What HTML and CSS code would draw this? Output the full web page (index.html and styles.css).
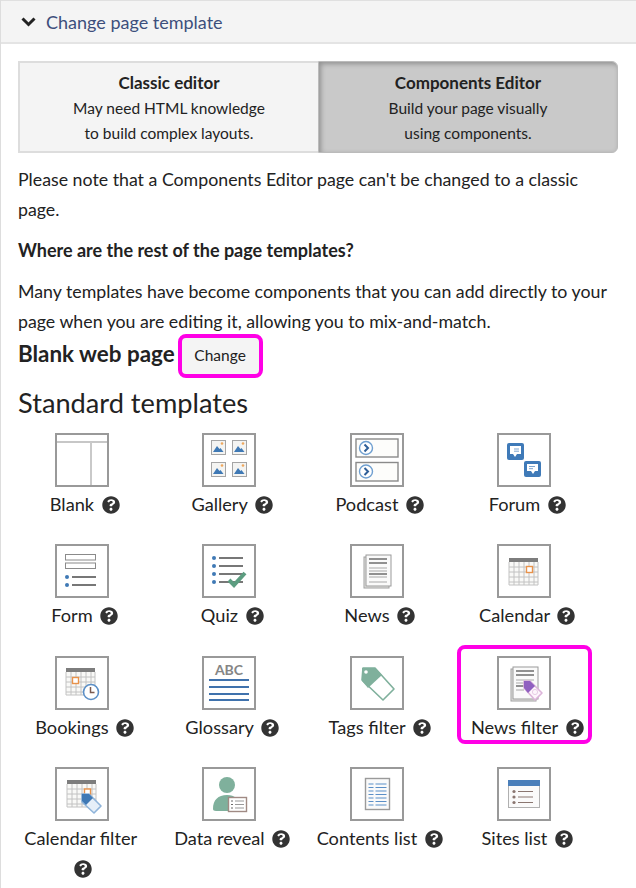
FILE: index.html
```html
<!DOCTYPE html>
<html lang="en">
<head>
  <meta charset="UTF-8">
  <title>Change page template</title>
  <meta name="viewport" content="width=device-width, initial-scale=1.0">
  <link rel="stylesheet" href="styles.css">
</head>
<body>

<!-- shared icon parts -->
<svg class="defs" width="0" height="0">
  <symbol id="help" viewBox="0 0 512 512">
    <path fill="currentColor" d="M504 256c0 136.997-111.043 248-248 248S8 392.997 8 256C8 119.083 119.043 8 256 8s248 111.083 248 248zM262.655 90c-54.497 0-89.255 22.957-109.52 53.468-2.625 3.954-1.747 9.286 2.05 12.16l34.673 26.293c3.905 2.962 9.469 2.258 12.52-1.605 17.851-22.641 30.091-35.799 57.293-35.799 20.438 0 45.7 13.164 45.7 32.982 0 14.988-12.372 22.681-32.54 33.992C247.04 210.5 216 229.5 216 270.3V276c0 6.627 5.373 12 12 12h56c6.627 0 12-5.373 12-12v-4c0-27.9 77.6-29.4 77.6-101.6 0-54.5-56.5-80.4-110.9-80.4zM256 336c-23.7 0-43 19.3-43 43s19.3 43 43 43 43-19.3 43-43-19.3-43-43-43z"/>
  </symbol>
  <g id="thumb">
    <rect x="0.5" y="0.5" width="14" height="14" fill="#f4f4f2" stroke="#a5a5a5"/>
    <path d="M2 12l4-6 2.5 3 1-1 3 4z" fill="#3f79b5"/>
    <circle cx="11" cy="3.5" r="1.3" fill="#efa75c"/>
  </g>
  <g id="play">
    <circle r="6.5" fill="#fff" stroke="#6f9fd0" stroke-width="1.4"/>
    <path d="M-1.5 -3.5L2 0L-1.5 3.5" fill="none" stroke="#2f5f98" stroke-width="2"/>
  </g>
  <g id="calgrid">
    <rect x="0" y="0" width="29" height="27" fill="#f9f9f7" stroke="none"/>
    <path d="M0 9h29M0 14h29M0 19h29M0 24h29M5 4v23M10 4v23M15 4v23M20 4v23M25 4v23M0 4v23M29 4v23M0 27h29" stroke="#c2c2c2" stroke-width="1" fill="none"/>
    <rect x="0" y="0" width="29" height="4" fill="#7d7d7d"/>
  </g>
</svg>

<div class="panel">

  <div class="panel-head">
    <svg class="chevron" width="15" height="10" viewBox="0 0 15 10"><path d="M1.5 1.500L7.500 7.500L13.500 1.500" fill="none" stroke="#222" stroke-width="3"/></svg>
    <a class="panel-title">Change page template</a>
  </div>

  <div class="panel-body">

    <div class="editor-switch">
      <div class="editor-opt">
        <strong>Classic editor</strong>
        May need HTML knowledge<br>to build complex layouts.
      </div>
      <div class="editor-opt active">
        <strong>Components Editor</strong>
        Build your page visually<br>using components.
      </div>
    </div>

    <p class="note">Please note that a Components Editor page can't be changed to a classic page.</p>
    <p class="note note-bold">Where are the rest of the page templates?</p>
    <p class="note">Many templates have become components that you can add directly to your page when you are editing it, allowing you to mix-and-match.</p>

    <div class="current">
      <span class="current-name">Blank web page</span>
      <button class="change-btn">Change</button>
    </div>

    <h2 class="section-title">Standard templates</h2>

    <div class="tpl-grid">

      <div class="tpl">
        <div class="tpl-icon">
          <svg viewBox="0 0 50 50" width="50" height="50"><path d="M-2 7h54" stroke="#b5b5b5" stroke-width="1.5"/><path d="M34 7v45" stroke="#c9c9c9" stroke-width="2"/></svg>
        </div>
        <div class="tpl-label">Blank <svg class="help"><use href="#help"/></svg></div>
      </div>

      <div class="tpl">
        <div class="tpl-icon">
          <svg viewBox="0 0 50 50" width="50" height="50">
            <use href="#thumb" x="7" y="5"/><use href="#thumb" x="28" y="5"/>
            <use href="#thumb" x="7" y="27"/><use href="#thumb" x="28" y="27"/>
          </svg>
        </div>
        <div class="tpl-label">Gallery <svg class="help"><use href="#help"/></svg></div>
      </div>

      <div class="tpl">
        <div class="tpl-icon">
          <svg viewBox="0 0 50 50" width="50" height="50">
            <rect x="4" y="4" width="42" height="18" fill="#fdfdfb" stroke="#8a8a8a" stroke-width="1.4"/>
            <rect x="4" y="27.5" width="42" height="18.5" fill="#fdfdfb" stroke="#8a8a8a" stroke-width="1.4"/>
            <use href="#play" x="14" y="13"/><use href="#play" x="14" y="36.5"/>
          </svg>
        </div>
        <div class="tpl-label">Podcast <svg class="help"><use href="#help"/></svg></div>
      </div>

      <div class="tpl">
        <div class="tpl-icon">
          <svg viewBox="0 0 50 50" width="50" height="50">
            <rect x="8" y="8" width="17" height="17" rx="2" fill="#3f7ab8"/>
            <path d="M11 11h11v8h-4l-2 3-2-3h-3z" fill="#fff"/>
            <path d="M15 14h5M15 16.2h5" stroke="#7ea6d0" stroke-width="1"/>
            <rect x="25" y="26" width="17" height="16" rx="2" fill="#3f7ab8"/>
            <path d="M28 29h11v7h-3l-2 3-2-3h-4z" fill="#fff"/>
            <path d="M30 31.5h6M30 33.7h4" stroke="#7ea6d0" stroke-width="1"/>
          </svg>
        </div>
        <div class="tpl-label">Forum <svg class="help"><use href="#help"/></svg></div>
      </div>

      <div class="tpl">
        <div class="tpl-icon">
          <svg viewBox="0 0 50 50" width="50" height="50">
            <rect x="8.5" y="8.5" width="30" height="5.5" fill="#fff" stroke="#8a8a8a"/>
            <rect x="8.5" y="17" width="30" height="5.5" fill="#fff" stroke="#8a8a8a"/>
            <circle cx="10" cy="31" r="2" fill="#3f79b5"/><circle cx="10" cy="39" r="2" fill="#3f79b5"/>
            <path d="M15 31h24M15 39h24" stroke="#777" stroke-width="2"/>
          </svg>
        </div>
        <div class="tpl-label">Form <svg class="help"><use href="#help"/></svg></div>
      </div>

      <div class="tpl">
        <div class="tpl-icon">
          <svg viewBox="0 0 50 50" width="50" height="50">
            <circle cx="10" cy="12" r="2" fill="#3f79b5"/><circle cx="10" cy="20" r="2" fill="#3f79b5"/>
            <circle cx="10" cy="28" r="2" fill="#3f79b5"/><circle cx="10" cy="36" r="2" fill="#3f79b5"/>
            <path d="M15 12h24M15 20h24M15 28h24M15 36h24" stroke="#777" stroke-width="2"/>
            <path d="M25 34l5 5L41 27" fill="none" stroke="#5c9d80" stroke-width="4"/>
          </svg>
        </div>
        <div class="tpl-label">Quiz <svg class="help"><use href="#help"/></svg></div>
      </div>

      <div class="tpl">
        <div class="tpl-icon">
          <svg viewBox="0 0 50 50" width="50" height="50">
            <rect x="12" y="11" width="25" height="31" fill="#e4e4e2" stroke="#a0a0a0"/>
            <rect x="14" y="9" width="25" height="31" fill="#fafafa" stroke="#9a9a9a"/>
            <path d="M17 13h18M17 17h18M17 28h18" stroke="#6e6e6e" stroke-width="1.6"/>
            <path d="M17 22h18M17 25h18M17 31h18M17 36h18" stroke="#c4c4c4" stroke-width="1.6"/>
          </svg>
        </div>
        <div class="tpl-label">News <svg class="help"><use href="#help"/></svg></div>
      </div>

      <div class="tpl">
        <div class="tpl-icon">
          <svg viewBox="0 0 50 50" width="50" height="50">
            <use href="#calgrid" x="10" y="12"/>
            <rect x="27.5" y="20.5" width="6" height="6" fill="#fff" stroke="#e8924a" stroke-width="1.4"/>
          </svg>
        </div>
        <div class="tpl-label">Calendar <svg class="help"><use href="#help"/></svg></div>
      </div>

      <div class="tpl">
        <div class="tpl-icon">
          <svg viewBox="0 0 50 50" width="50" height="50">
            <use href="#calgrid" x="9" y="10"/>
            <rect x="15.5" y="19.5" width="6" height="6" fill="#fff" stroke="#e8924a" stroke-width="1.4"/>
            <circle cx="34" cy="34" r="7.5" fill="#fff" stroke="#5b8fc7" stroke-width="1.6"/>
            <path d="M33.5 29v5.5h4" fill="none" stroke="#7a5a50" stroke-width="1.5"/>
          </svg>
        </div>
        <div class="tpl-label">Bookings <svg class="help"><use href="#help"/></svg></div>
      </div>

      <div class="tpl">
        <div class="tpl-icon">
          <svg viewBox="0 0 50 50" width="50" height="50">
            <text class="abc" x="25" y="16.5" text-anchor="middle">ABC</text>
            <path d="M5 22h40M5 29h40M5 36h40M5 42h40" stroke="#3f72ad" stroke-width="2"/>
          </svg>
        </div>
        <div class="tpl-label">Glossary <svg class="help"><use href="#help"/></svg></div>
      </div>

      <div class="tpl">
        <div class="tpl-icon">
          <svg viewBox="0 0 50 50" width="50" height="50">
            <path d="M11 10h12l19 21-11 11-21-20z" fill="#fff" stroke="#7fb09c" stroke-width="1.6" stroke-linejoin="round"/>
            <path d="M10 10h13l7 7-14 13-6-7z" fill="#7fb09c"/>
            <circle cx="14" cy="14" r="1.8" fill="#fff"/>
          </svg>
        </div>
        <div class="tpl-label">Tags filter <svg class="help"><use href="#help"/></svg></div>
      </div>

      <div class="tpl tpl-marked">
        <div class="tpl-icon">
          <svg viewBox="0 0 50 50" width="50" height="50">
            <rect x="12" y="11" width="25" height="32" fill="#e4e4e2" stroke="#a0a0a0"/>
            <rect x="14" y="9" width="25" height="32" fill="#fafafa" stroke="#9a9a9a"/>
            <path d="M17 13h18M17 17h18M17 28h8" stroke="#6e6e6e" stroke-width="1.6"/>
            <path d="M17 22h18M17 25h12M17 32h8" stroke="#c4c4c4" stroke-width="1.6"/>
            <path d="M25 23h6l12 12-7 7-11-12z" fill="#fdf5fb" stroke="#dcb4da" stroke-width="1.6" stroke-linejoin="round"/>
            <path d="M25 23h6l5 5-7 7-4-5z" fill="#9060c0"/>
            <circle cx="36" cy="34" r="2.6" fill="none" stroke="#e8cde6"/>
          </svg>
        </div>
        <div class="tpl-label">News filter <svg class="help"><use href="#help"/></svg></div>
      </div>

      <div class="tpl">
        <div class="tpl-icon">
          <svg viewBox="0 0 50 50" width="50" height="50">
            <use href="#calgrid" x="10" y="11"/>
            <rect x="27.5" y="20" width="6" height="6" fill="#fff" stroke="#e8924a" stroke-width="1.4"/>
            <path d="M25 25h7l12 12-7 7-12-11z" fill="#e6eff8" stroke="#8fb4da" stroke-width="1.6" stroke-linejoin="round"/>
            <path d="M25 25h7l4 4-7 7-4-4z" fill="#3f79b5"/>
          </svg>
        </div>
        <div class="tpl-label tpl-label-wrap">Calendar filter <svg class="help"><use href="#help"/></svg></div>
      </div>

      <div class="tpl">
        <div class="tpl-icon">
          <svg viewBox="0 0 50 50" width="50" height="50">
            <circle cx="23" cy="16" r="8" fill="#7fb09c"/>
            <path d="M9 40c0-9 5-14 14-14 4 0 7 1 9 3h-8v13H12c-2 0-3-1-3-2z" fill="#7fb09c"/>
            <rect x="24.5" y="28.5" width="18" height="14" fill="#fff" stroke="#a08a84" stroke-width="1.4"/>
            <path d="M31 32h9M31 35.5h9M31 39h9" stroke="#999" stroke-width="1"/>
            <path d="M27 32h2M27 35.5h2M27 39h2" stroke="#6a6a6a" stroke-width="1"/>
          </svg>
        </div>
        <div class="tpl-label">Data reveal <svg class="help"><use href="#help"/></svg></div>
      </div>

      <div class="tpl">
        <div class="tpl-icon">
          <svg viewBox="0 0 50 50" width="50" height="50">
            <rect x="13.5" y="9.5" width="24" height="31" fill="#fafafa" stroke="#9a9a9a" stroke-width="1.4"/>
            <path d="M16.5 15h5M23.5 15h11M16.5 18.5h5M23.5 18.5h11M16.5 22h5M23.5 22h11M16.5 25.500h5M23.500 25.500h11M16.500 29h5M23.500 29h11M16.500 32.500h5M23.500 32.500h11M16.500 36h5M23.500 36h11" stroke="#5b8fc7" stroke-width="1.2"/>
          </svg>
        </div>
        <div class="tpl-label">Contents list <svg class="help"><use href="#help"/></svg></div>
      </div>

      <div class="tpl">
        <div class="tpl-icon">
          <svg viewBox="0 0 50 50" width="50" height="50">
            <rect x="9.500" y="11.500" width="31" height="27" fill="#fafafa" stroke="#b0b0b0"/>
            <rect x="9" y="11" width="32" height="6" fill="#4a7fba"/>
            <circle cx="15" cy="22.500" r="1.600" fill="#8a7670"/><circle cx="15" cy="28" r="1.600" fill="#8a7670"/><circle cx="15" cy="33.500" r="1.600" fill="#8a7670"/>
            <path d="M19 22.500h15M19 28h15M19 33.500h15" stroke="#8a7670" stroke-width="1"/>
          </svg>
        </div>
        <div class="tpl-label">Sites list <svg class="help"><use href="#help"/></svg></div>
      </div>

    </div>
  </div>
</div>

</body>
</html>
```

FILE: styles.css
```css
*, *::after { box-sizing: border-box; }

html, body {
  height: 100%;
}

body {
  margin: 0;
  background: #fff;
  color: #222;
  font-family: Lato, "Open Sans", sans-serif;
  font-size: 18px;
  line-height: 30px;
  overflow: hidden;
}

.defs {
  position: absolute;
}

.panel {
  height: 888px;
  border-left: 1px solid #ddd;
}

.panel-head {
  display: flex;
  align-items: center;
  gap: 10px;
  height: 44px;
  padding-left: 20px;
  background: #f4f4f4;
  border-top: 1px solid #e0e0e0;
  border-bottom: 2px solid #e4e4e4;
}

.chevron {
  flex: none;
}

.panel-title {
  color: #3d4f7c;
}

.panel-body {
  padding: 17px 17px 0;
}

/* editor switch */

.editor-switch {
  display: grid;
  grid-template-columns: 300px 300px;
  height: 92px;
}

.editor-opt {
  padding-top: 7px;
  font-size: 15.5px;
  line-height: 25.5px;
  text-align: center;
  background: #f4f4f4;
  border: 2px solid #ddd;
  border-right: none;
}

.editor-opt strong {
  display: block;
  font-size: 17px;
}

.editor-opt.active {
  background: #c9c9c9;
  border: 1px solid #bbb;
  border-radius: 0 6px 6px 0;
  box-shadow: inset 2px 2px 5px rgba(0,0,0,0.28);
  padding-top: 8px;
}

.note {
  margin: 11px 0 0;
  font-size: 17.75px;
  line-height: 30px;
}

.note-bold {
  font-weight: 700;
  font-size: 18px;
  margin-top: 11px;
}

/* current template */

.current {
  display: flex;
  align-items: flex-start;
  gap: 3px;
  margin-top: -4px;
}

.current-name {
  font-size: 22.4px;
  font-weight: 700;
  line-height: 36px;
  margin-top: 4px;
}

.change-btn {
  width: 85px;
  height: 44px;
  margin-top: 2px;
  padding: 0 0 2px;
  font: inherit;
  font-size: 15.5px;
  color: #222;
  background: #f4f4f4;
  border: 4px solid #ff00e6;
  border-radius: 8px;
}

.section-title {
  margin: 5px 0 10px;
  font-size: 27.2px;
  font-weight: 400;
  line-height: 40px;
}

/* template grid */

.tpl-grid {
  display: grid;
  grid-template-columns: repeat(4, 147.5px);
  grid-auto-rows: 111.33px;
  margin-left: -10px;
}

.tpl {
  position: relative;
  padding: 0 5px;
  text-align: center;
}

.tpl-icon {
  width: 54px;
  height: 54px;
  margin: 0 auto 2px;
  background: #fff;
  border: 2px solid #999;
}

.tpl-icon svg {
  display: block;
  overflow: hidden;
}

.tpl-label {
  font-size: 18.2px;
  line-height: 30px;
}

.help {
  width: 18px;
  height: 18px;
  margin-left: 3px;
  margin-right: -6px;
  vertical-align: -3px;
  color: #333;
}

.tpl-label-wrap {
  padding-right: 2px;
}

.tpl-label-wrap .help {
  margin-left: 5px;
  margin-right: 0;
}

.abc {
  font-family: Lato, sans-serif;
  font-size: 14px;
  font-weight: 700;
  fill: #858585;
}

/* pink marker round the news filter */

.tpl-marked::after {
  content: "";
  position: absolute;
  top: -11px;
  left: 6px;
  width: 135px;
  height: 99px;
  border: 4px solid #ff00e6;
  border-radius: 8px;
  pointer-events: none;
}
```
